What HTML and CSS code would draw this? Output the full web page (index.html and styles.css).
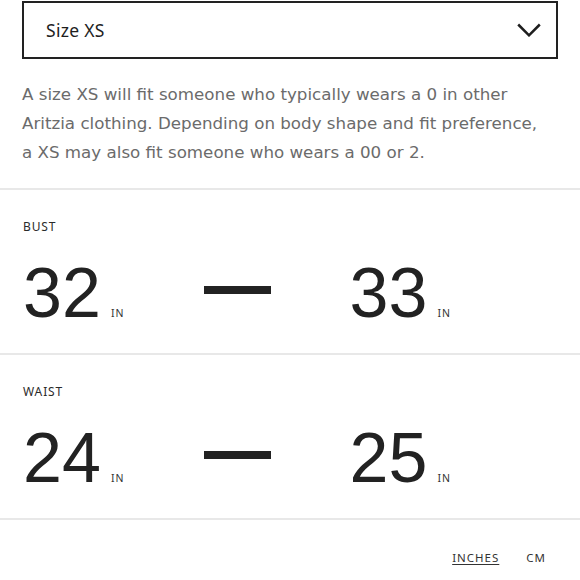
FILE: index.html
```html
<!DOCTYPE html>
<html>
<head>
<meta charset="utf-8">
<link rel="stylesheet" href="styles.css">
</head>
<body>
<div class="select">
  <span class="select-label">Size XS</span>
  <svg class="chevron" width="24" height="14" viewBox="0 0 24 14"><path d="M1.2 1.5 L12 12.3 L22.8 1.5" fill="none" stroke="#1e1e1e" stroke-width="2.5"/></svg>
</div>
<p class="desc">A size XS will fit someone who typically wears a 0 in other Aritzia clothing. Depending on body shape and fit preference, a&nbsp;XS may also fit someone who wears a 00 or 2.</p>
<section class="measure">
  <div class="label">BUST</div>
  <div class="row">
    <div class="val"><span class="num">32</span><span class="unit">IN</span></div>
    <div class="dash"></div>
    <div class="val"><span class="num">33</span><span class="unit">IN</span></div>
  </div>
</section>
<section class="measure">
  <div class="label">WAIST</div>
  <div class="row">
    <div class="val"><span class="num">24</span><span class="unit">IN</span></div>
    <div class="dash"></div>
    <div class="val"><span class="num">25</span><span class="unit">IN</span></div>
  </div>
</section>
<div class="units">
  <span class="unit-opt active">INCHES</span>
  <span class="unit-opt">CM</span>
</div>
</body>
</html>
```
FILE: styles.css
```css
html, body {
  margin: 0;
  padding: 0;
  background: #fff;
}
body {
  font-family: "Noto Sans", "Liberation Sans", sans-serif;
  color: #222;
}
.select {
  margin: 1px 22px 0;
  height: 54px;
  border: 2px solid #222;
  display: flex;
  align-items: center;
  justify-content: space-between;
  padding: 0 15px 0 22px;
}
.select-label {
  font-size: 17.5px;
  letter-spacing: 0.3px;
  color: #1e1e1e;
}
.chevron {
  display: block;
}
.desc {
  margin: 21px 22px 0;
  font-family: "DejaVu Sans", "Noto Sans", sans-serif;
  font-size: 16.7px;
  line-height: 29px;
  color: #6b6b6b;
  height: 108px;
}
.measure {
  border-top: 2px solid #e8e8e8;
  padding: 30px 22px 0 23px;
  height: 133px;
}
.label {
  font-size: 12px;
  line-height: 14px;
  letter-spacing: 0.9px;
  color: #2a2a2a;
}
.row {
  margin-top: 24px;
  width: 428px;
  display: flex;
  justify-content: space-between;
  align-items: flex-start;
}
.val {
  display: flex;
  align-items: baseline;
}
.num {
  font-family: "Liberation Sans", Arial, sans-serif;
  font-size: 70px;
  line-height: 70px;
  color: #222;
}
.unit {
  font-size: 10.5px;
  letter-spacing: 1px;
  margin-left: 10px;
  color: #333;
}
.dash {
  width: 67px;
  height: 8px;
  background: #222;
  margin-top: 28px;
}
.units {
  border-top: 2px solid #e8e8e8;
  display: flex;
  justify-content: flex-end;
  gap: 27px;
  padding: 31px 34px 0 0;
}
.unit-opt {
  font-size: 11.5px;
  line-height: 14px;
  letter-spacing: 1px;
  color: #333;
}
.unit-opt.active {
  text-decoration: underline;
  text-decoration-thickness: 1.5px;
  text-underline-offset: 2px;
}
```
